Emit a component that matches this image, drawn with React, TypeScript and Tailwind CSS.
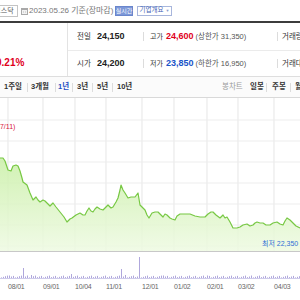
const pts: [number, number][] = [
  [0, 158], [3, 158], [5, 161], [8, 170], [11, 171], [13, 166], [16, 165], [18, 166], [20, 171], [22, 178], [23, 182], [27, 185], [30, 193], [33, 200], [36, 197], [38, 200], [40, 202], [43, 200], [45, 201], [48, 204], [50, 206], [53, 203], [56, 207], [60, 212], [64, 217], [67, 222], [70, 219], [72, 218], [76, 215], [80, 213], [83, 215], [85, 215], [87, 211], [89, 208], [91, 211], [93, 212], [95, 209], [97, 207], [100, 209], [103, 210], [106, 207], [108, 205], [111, 208], [113, 207], [116, 202], [118, 198], [120, 190], [121, 185], [123, 190], [125, 193], [128, 198], [131, 197], [135, 197], [138, 193], [140, 205], [143, 208], [145, 210], [147, 215], [149, 218], [152, 213], [155, 212], [158, 212], [161, 215], [163, 217], [165, 214], [167, 215], [170, 218], [172, 219], [175, 220], [177, 216], [180, 214], [185, 214], [190, 214], [195, 216], [200, 217], [205, 217], [208, 214], [211, 212], [213, 212], [216, 215], [220, 218], [223, 215], [225, 218], [227, 217], [230, 222], [233, 228], [237, 228], [240, 227], [243, 225], [247, 224], [250, 226], [253, 225], [255, 223], [257, 222], [260, 223], [263, 223], [266, 225], [270, 225], [273, 223], [277, 222], [280, 224], [283, 225], [285, 221], [287, 218], [290, 220], [293, 223], [296, 226], [300, 228],
];

const linePath = "M" + pts.map(([x, y]) => `${x},${y}`).join(" L");
const fillPath = linePath + " L300,251 L0,251 Z";

const gridX = [8, 43, 75, 106, 142, 174, 207, 238, 274];
const gridY = [120, 141, 162, 183, 204, 225, 246];

const spikes: Record<number, number> = { 23: 10, 121: 9, 139: 21, 71: 4, 31: 3, 9: 2.5, 125: 3, 163: 2.5, 251: 2.5, 207: 2.5, 27: 2.5 };
const vols = Array.from({ length: 150 }, (_, i) => {
  const x = i * 2 + 1;
  const base = 0.6 + ((i * 7919) % 7) * 0.3;
  return { x, h: spikes[x] ?? base };
});

const dates: [string, number][] = [
  ["08/01", 8], ["09/01", 43], ["10/04", 75], ["11/01", 106], ["12/01", 142], ["01/02", 174], ["02/01", 207], ["03/02", 238], ["04/03", 274],
];

function Sep() {
  return <span className="w-px h-[9px] bg-[#dcdcdc] shrink-0" />;
}

function InfoRow(props: {
  l1: string; v1: string; l2: string; v2: string; v2c: string; sub: string; l3: string; h: string; border?: boolean;
}) {
  return (
    <div className={`${props.h} flex items-center whitespace-nowrap leading-none ${props.border ? "border-b border-[#ebebeb]" : ""}`}>
      <div className="w-[75px] pl-[9px] flex items-center shrink-0">
        <span className="w-[20px] text-[7.5px] text-[#333]">{props.l1}</span>
        <span className="text-[9px] font-bold text-[#222]">{props.v1}</span>
      </div>
      <Sep />
      <div className="w-[133px] pl-[6px] flex items-center shrink-0">
        <span className="w-[16px] text-[7px] text-[#333]">{props.l2}</span>
        <span className={`text-[9px] font-bold ${props.v2c}`}>{props.v2}</span>
        <span className="ml-[2px] text-[7.5px] text-[#555]">{props.sub}</span>
      </div>
      <Sep />
      <div className="pl-[4px] text-[7.5px] text-[#333]">{props.l3}</div>
    </div>
  );
}

export default function App() {
  return (
    <div className="w-[300px] h-[300px] overflow-hidden bg-white font-['Liberation_Sans','Noto_Sans_CJK_KR',sans-serif] text-[#333]">
      {/* top bar */}
      <div className="h-[21px] flex items-center whitespace-nowrap leading-none">
        <div className="ml-[-10px] w-[28px] h-[12px] border border-[#c4c4c4] flex items-center justify-center text-[7px] text-[#555] shrink-0">코스닥</div>
        <svg className="ml-[3px] shrink-0" width="7" height="8" viewBox="0 0 7 8">
          <rect x="0.5" y="1.5" width="6" height="6" fill="#f2f2f2" stroke="#a9a9a9" strokeWidth="1" />
          <rect x="0.5" y="1.5" width="6" height="1.5" fill="#a9a9a9" />
          <rect x="2" y="4.5" width="1" height="1" fill="#bbb" />
          <rect x="4" y="4.5" width="1" height="1" fill="#bbb" />
        </svg>
        <span className="ml-[1px] w-[86px] text-[8px] text-[#777] shrink-0">2023.05.26 기준(장마감)</span>
        <span className="w-[18px] h-[10px] bg-[#7d98d8] border border-[#6a86cc] text-white text-[6px] flex items-center justify-center shrink-0">실시간</span>
        <span className="ml-[4px] w-[35px] h-[10px] border border-[#a8b6dc] text-[#3f63b5] text-[6.5px] flex items-center justify-center gap-[2px] shrink-0">
          기업개요<span className="text-[4px] text-[#8a9acb]">▼</span>
        </span>
      </div>
      <div className="h-[2px] bg-[#3c3c3c]" />

      {/* info */}
      <div className="flex h-[54px] border-b border-[#dedede]">
        <div className="w-[68px] border-r border-[#e3e3e3] flex items-end pb-[8px] shrink-0">
          <span className="ml-[-4px] text-[10px] font-bold text-[#e0001b] leading-none">0.21%</span>
        </div>
        <div className="flex-1 flex flex-col">
          <InfoRow h="h-[28px]" border l1="전일" v1="24,150" l2="고가" v2="24,600" v2c="text-[#e0001b]" sub="(상한가 31,350)" l3="거래량" />
          <InfoRow h="h-[25px]" l1="시가" v1="24,200" l2="저가" v2="23,850" v2c="text-[#1a54c8]" sub="(하한가 16,950)" l3="거래대금" />
        </div>
      </div>

      {/* tabs */}
      <div className="h-[21px] border-b border-[#d9d9d9] bg-[#fbfbfb] flex items-center text-[7.5px] font-bold text-[#333] whitespace-nowrap leading-none">
        <span className="w-[27px] pl-[4px] shrink-0">1주일</span>
        <Sep />
        <span className="w-[27px] pl-[3px] shrink-0">3개월</span>
        <Sep />
        <span className="w-[16px] pl-[2px] shrink-0 text-[#1f4fc4]">1년</span>
        <Sep />
        <span className="w-[19px] pl-[4px] shrink-0">3년</span>
        <Sep />
        <span className="w-[19px] pl-[4px] shrink-0">5년</span>
        <Sep />
        <span className="w-[27px] pl-[4px] shrink-0">10년</span>
        <span className="ml-[82px] w-[28px] shrink-0 font-normal text-[#9a9a9a]">봉차트</span>
        <span className="w-[16px] shrink-0">일봉</span>
        <Sep />
        <span className="w-[23px] pl-[5px] shrink-0">주봉</span>
        <Sep />
        <span className="pl-[4px] shrink-0">월봉</span>
      </div>

      {/* chart */}
      <div className="relative h-[154px] border-b border-[#c8c8c8]">
        <svg className="absolute left-0 top-0" width="300" height="153" viewBox="0 98 300 153">
          <defs>
            <linearGradient id="gfill" x1="0" y1="0" x2="0" y2="1">
              <stop offset="0" stopColor="#c9efa6" />
              <stop offset="1" stopColor="#eefae2" />
            </linearGradient>
          </defs>
          {gridY.map((y) => (
            <line key={"h" + y} x1="0" x2="300" y1={y} y2={y} stroke="#ededed" strokeWidth="1.2" />
          ))}
          {gridX.map((x) => (
            <line key={"v" + x} x1={x} x2={x} y1="98" y2="251" stroke="#ececec" strokeWidth="1.3" />
          ))}
          <path d={fillPath} fill="url(#gfill)" fillOpacity="0.85" />
          <path d={linePath} fill="none" stroke="#77c843" strokeWidth="1.2" strokeLinejoin="round" />
        </svg>
        <span className="absolute left-[-16px] top-[25px] text-[7px] leading-[8px] text-[#d9163a] whitespace-nowrap">(22/07/11)</span>
        <span className="absolute left-[262px] top-[142px] text-[7px] leading-[8px] text-[#2f6fd6] whitespace-nowrap">최저 22,350</span>
      </div>

      {/* volume */}
      <div className="h-[29px]">
        <svg width="300" height="29" viewBox="0 252 300 29">
          <line x1="0" x2="300" y1="278.5" y2="278.5" stroke="#c2bce6" strokeWidth="0.8" />
          {vols.map((v) => (
            <rect key={v.x} x={v.x} y={278 - v.h} width="0.9" height={v.h} fill="#a69dd8" />
          ))}
        </svg>
      </div>

      {/* dates */}
      <div className="relative h-[12px]">
        {dates.map(([d, x]) => (
          <span key={d} className="absolute top-0 text-[7px] leading-[12px] text-[#666] tracking-[-0.2px]" style={{ left: x }}>
            {d}
          </span>
        ))}
      </div>
    </div>
  );
}
